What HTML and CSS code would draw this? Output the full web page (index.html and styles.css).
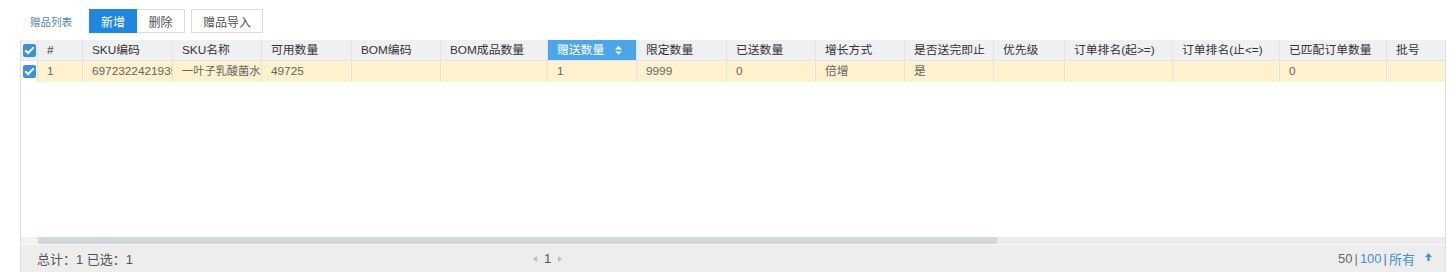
FILE: index.html
```html
<!DOCTYPE html>
<html lang="zh-CN">

<head>
    <meta charset="UTF-8">
    <title>赠品列表</title>
    <link rel="stylesheet" href="styles.css">
</head>

<body>
    <div class="toolbar">
        <span class="toolbar-title">赠品列表</span>
        <div class="btn-group">
            <button class="btn btn-primary">新增</button>
            <button class="btn">删除</button>
        </div>
        <button class="btn btn-single">赠品导入</button>
    </div>

    <div class="grid">
        <div class="grid-row grid-head">
            <div class="cell cell-check"><span class="check"></span></div>
            <div class="cell">#</div>
            <div class="cell">SKU编码</div>
            <div class="cell">SKU名称</div>
            <div class="cell">可用数量</div>
            <div class="cell">BOM编码</div>
            <div class="cell">BOM成品数量</div>
            <div class="cell cell-sorted">赠送数量
                <svg class="sort-icon" width="7" height="9" viewBox="0 0 7 9">
                    <path d="M3.5 0 L7 3.6 L0 3.6 Z" fill="#fff" />
                    <path d="M0 5.2 L7 5.2 L3.5 9 Z" fill="#fff" opacity="0.75" />
                </svg>
            </div>
            <div class="cell">限定数量</div>
            <div class="cell">已送数量</div>
            <div class="cell">增长方式</div>
            <div class="cell">是否送完即止</div>
            <div class="cell">优先级</div>
            <div class="cell">订单排名(起&gt;=)</div>
            <div class="cell">订单排名(止&lt;=)</div>
            <div class="cell">已匹配订单数量</div>
            <div class="cell cell-last">批号</div>
        </div>
        <div class="grid-row grid-data selected">
            <div class="cell cell-check"><span class="check"></span></div>
            <div class="cell">1</div>
            <div class="cell cell-clip">6972322421935</div>
            <div class="cell cell-clip cell-name">一叶子乳酸菌水</div>
            <div class="cell">49725</div>
            <div class="cell"></div>
            <div class="cell"></div>
            <div class="cell">1</div>
            <div class="cell">9999</div>
            <div class="cell">0</div>
            <div class="cell">倍增</div>
            <div class="cell">是</div>
            <div class="cell"></div>
            <div class="cell"></div>
            <div class="cell"></div>
            <div class="cell">0</div>
            <div class="cell cell-last"></div>
        </div>
        <div class="grid-body"></div>
        <div class="hscroll">
            <div class="hscroll-start"></div>
            <div class="hscroll-thumb"></div>
        </div>
        <div class="footer">
            <div class="footer-total">总计：1 已选：1</div>
            <div class="pager">
                <span class="pager-arrow pager-prev"></span>
                <span class="pager-num">1</span>
                <span class="pager-arrow pager-next"></span>
            </div>
            <div class="page-size">
                <span class="size-current">50</span><span class="size-sep">|</span><a class="size-link">100</a><span class="size-sep">|</span><a class="size-link">所有</a>
                <svg class="to-top" width="7" height="8" viewBox="0 0 7 8">
                    <path d="M3.5 0 L7 4 L4.6 4 L4.6 8 L2.4 8 L2.4 4 L0 4 Z" fill="#3d8fe0" />
                </svg>
            </div>
        </div>
    </div>
</body>

</html>
```

FILE: styles.css
```css
body {
    margin: 0;
    padding: 0;
    background-color: #fff;
    font-family: "Liberation Sans", "Noto Sans CJK SC", sans-serif;
    color: #333;
}

.toolbar {
    display: flex;
    flex-direction: row;
    align-items: center;
    height: 24px;
    padding: 9px 0 7px 30px;
}

.toolbar-title {
    font-size: 10.5px;
    color: #4d86c6;
    margin-right: 17px;
}

.btn-group {
    display: flex;
    flex-direction: row;
}

.btn {
    height: 24px;
    width: 48px;
    padding: 0;
    margin: 0;
    border: 1px solid #dcdcdc;
    background-color: #fff;
    color: #555;
    font-family: inherit;
    font-size: 12px;
    cursor: pointer;
}

.btn-group .btn + .btn {
    border-left: none;
}

.btn-primary {
    background-color: #1f87e2;
    border-color: #1f87e2;
    color: #fff;
}

.btn-single {
    width: 72px;
    margin-left: 6px;
}

.grid {
    margin-left: 20px;
    width: 1426px;
    box-sizing: border-box;
    border-left: 1px solid #e0e0e0;
    border-right: 1px solid #e0e0e0;
}

.grid-row {
    display: grid;
    grid-template-columns: 17px 45px 90px 89px 90px 89px 107px 89px 90px 89px 89px 89px 71px 108px 107px 107px 58px;
    height: 21px;
    font-size: 11.8px;
}

.cell {
    box-sizing: border-box;
    padding: 0 9px;
    line-height: 21px;
    white-space: nowrap;
    overflow: hidden;
    border-right: 1px solid #e3e3e3;
}

.cell-clip {
    padding-right: 0;
}

.cell-name {
    font-size: 11.2px;
}

.cell-last {
    border-right: none;
}

.grid-head {
    background-color: #eff0f2;
    color: #333;
}

.grid-head .cell {
    border-bottom: 1px solid #e1e3e6;
    line-height: 20px;
}

.cell-sorted {
    background-color: #4aa5ea;
    color: #fff;
    display: flex;
    align-items: center;
}

.sort-icon {
    margin-left: 11px;
}

.grid-data {
    background-color: #fef1cd;
    color: #666;
}

.grid-data .cell-check {
    background-color: #fff;
}

.cell-check {
    padding: 0;
    display: flex;
    align-items: center;
    justify-content: center;
}

.check {
    width: 13px;
    height: 13px;
    border-radius: 2px;
    background-color: #3d8fe3;
    position: relative;
}

.check::after {
    content: "";
    position: absolute;
    left: 4px;
    top: 1px;
    width: 3px;
    height: 7px;
    border-right: 2px solid #fff;
    border-bottom: 2px solid #fff;
    transform: rotate(45deg);
}

.grid-body {
    height: 155px;
    background-color: #fff;
}

.hscroll {
    display: flex;
    flex-direction: row;
    height: 7px;
    background-color: #ececec;
}

.hscroll-start {
    width: 17px;
    background-color: #f1f2f3;
}

.hscroll-thumb {
    width: 959px;
    background-color: #d3d8de;
}

.footer {
    display: flex;
    flex-direction: row;
    align-items: center;
    height: 27px;
    border-top: 1px solid #f7f7f7;
    background-color: #ededed;
    font-size: 13px;
    color: #555;
}

.footer-total {
    width: 496px;
    padding-left: 16px;
}

.pager {
    display: flex;
    flex-direction: row;
    align-items: center;
}

.pager-num {
    margin: 0 7px;
    color: #555;
}

.pager-arrow {
    width: 0;
    height: 0;
    border-top: 3.5px solid transparent;
    border-bottom: 3.5px solid transparent;
}

.pager-prev {
    border-right: 4px solid #bdbdbd;
}

.pager-next {
    border-left: 4px solid #bdbdbd;
}

.page-size {
    margin-left: auto;
    padding-right: 13px;
    display: flex;
    flex-direction: row;
    align-items: center;
}

.size-current {
    color: #666;
}

.size-sep {
    color: #777;
    margin: 0 2px;
}

.size-link {
    color: #3d8fe0;
    cursor: pointer;
}

.to-top {
    margin-left: 10px;
    margin-top: -4px;
}
```
